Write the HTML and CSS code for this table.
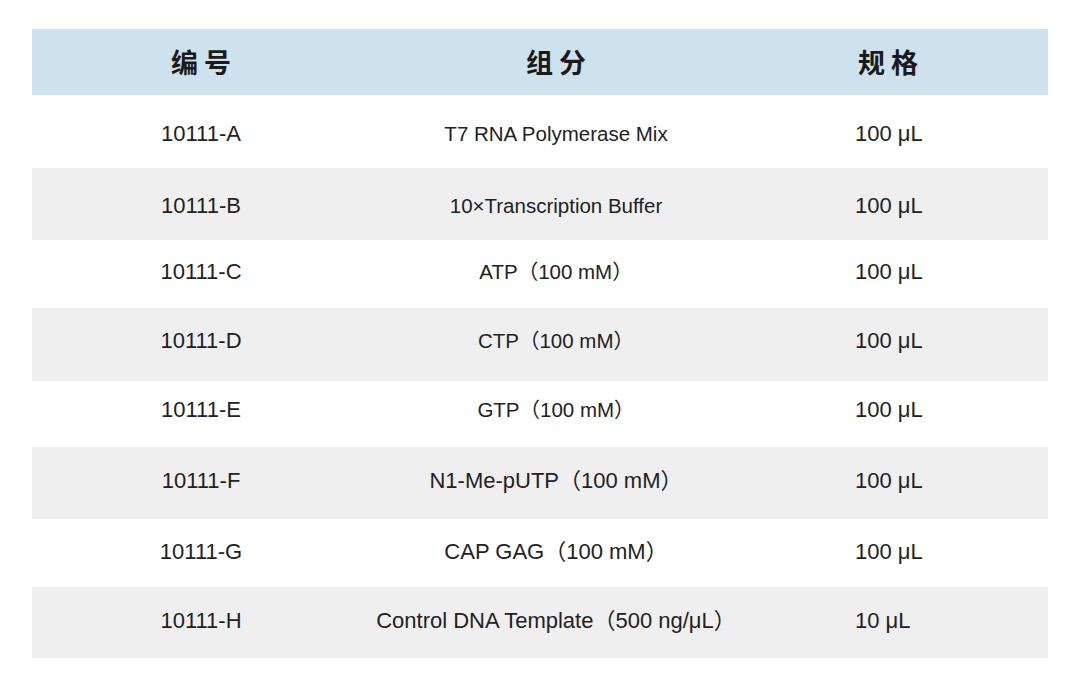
FILE: index.html
```html
<!DOCTYPE html>
<html lang="zh">
<head>
<meta charset="utf-8">
<link rel="stylesheet" href="styles.css">
</head>
<body>
<div class="page">
  <div class="table">
    <div class="row head">
      <div class="cell c1">编 号</div>
      <div class="cell c2">组 分</div>
      <div class="cell c3">规 格</div>
    </div>
    <div class="row ra">
      <div class="cell c1">10111-A</div>
      <div class="cell c2">T7 RNA Polymerase Mix</div>
      <div class="cell c3">100 μL</div>
    </div>
    <div class="row alt rb">
      <div class="cell c1">10111-B</div>
      <div class="cell c2">10×Transcription Buffer</div>
      <div class="cell c3">100 μL</div>
    </div>
    <div class="row rc">
      <div class="cell c1">10111-C</div>
      <div class="cell c2">ATP（100 mM）</div>
      <div class="cell c3">100 μL</div>
    </div>
    <div class="row alt rd">
      <div class="cell c1">10111-D</div>
      <div class="cell c2">CTP（100 mM）</div>
      <div class="cell c3">100 μL</div>
    </div>
    <div class="row re">
      <div class="cell c1">10111-E</div>
      <div class="cell c2">GTP（100 mM）</div>
      <div class="cell c3">100 μL</div>
    </div>
    <div class="row alt rf">
      <div class="cell c1">10111-F</div>
      <div class="cell c2 large">N1-Me-pUTP（100 mM）</div>
      <div class="cell c3">100 μL</div>
    </div>
    <div class="row rg">
      <div class="cell c1">10111-G</div>
      <div class="cell c2 large">CAP GAG（100 mM）</div>
      <div class="cell c3">100 μL</div>
    </div>
    <div class="row alt rh">
      <div class="cell c1">10111-H</div>
      <div class="cell c2 large">Control DNA Template（500 ng/μL）</div>
      <div class="cell c3">10 μL</div>
    </div>
  </div>
</div>
</body>
</html>
```

FILE: styles.css
```css
html, body {
  margin: 0;
  padding: 0;
  background: #ffffff;
}

.page {
  padding: 29px 32px 0 32px;
  font-family: "Liberation Sans", Arial, "Noto Sans CJK SC", sans-serif;
  color: #222222;
}

.table {
  width: 1016px;
  display: flex;
  flex-direction: column;
}

.row {
  display: grid;
  grid-template-columns: 338px 372px 306px;
  font-size: 22px;
  box-sizing: border-box;
}

.row.head {
  height: 66px;
  line-height: 66px;
  background: #cde2ed;
  font-family: "Noto Sans CJK SC", sans-serif;
  font-weight: 700;
  font-size: 27px;
  color: #1a1a1a;
}

.row.alt {
  background: #efefef;
}

.ra { height: 73px; padding-top: 4px; line-height: 69px; }
.rb { height: 72px; padding-top: 4px; line-height: 68px; }
.rc { height: 68px; padding-bottom: 4px; line-height: 64px; }
.rd { height: 73px; padding-bottom: 7px; line-height: 66px; }
.re { height: 66px; padding-bottom: 8px; line-height: 58px; }
.rf { height: 72px; padding-bottom: 4px; line-height: 68px; }
.rg { height: 68px; padding-bottom: 3px; line-height: 65px; }
.rh { height: 71px; padding-bottom: 3px; line-height: 68px; }

.cell {
  white-space: nowrap;
}

.c1 {
  text-align: center;
}

.c2 {
  text-align: center;
  font-size: 20.5px;
}

.c2.large {
  font-size: 22px;
}

.c3 {
  text-align: left;
  padding-left: 113px;
}

.head .cell {
  font-size: 27px;
}

.head .c3 {
  text-align: center;
  padding-left: 0;
  padding-right: 14px;
}
```
